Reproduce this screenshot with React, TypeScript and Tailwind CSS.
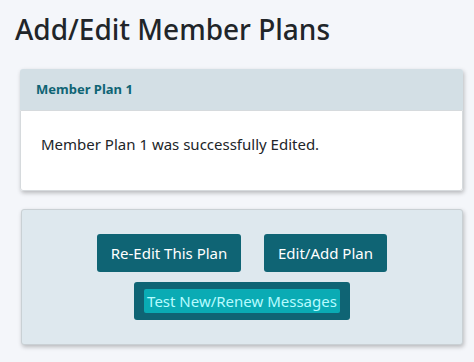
import React from "react";

export default function App() {
  return (
    <div className="min-h-screen bg-[#f4f6fa] pt-[12px] font-['Noto_Sans','Open_Sans',sans-serif] text-[#212529]">
      <h1 className="ml-[15px] text-[28px] leading-[34px] font-medium">Add/Edit Member Plans</h1>
      <div className="ml-[20px] mt-[23px] w-[443px] rounded-[3px] shadow-[1px_2px_4px_rgba(0,0,0,0.25)]">
        <div className="flex h-[41px] items-center rounded-t-[3px] bg-[#d3dfe5] px-[16px] text-[13px] font-bold text-[#0f6474]">
          Member Plan 1
        </div>
        <div className="h-[81px] rounded-b-[3px] border border-[#d6dadd] bg-white px-[20px] pt-[22px] text-[15px] leading-[22px]">
          Member Plan 1 was successfully Edited.
        </div>
      </div>
      <div className="ml-[21px] mt-[18px] flex h-[136px] w-[442px] flex-col items-center gap-[10px] rounded-[3px] border border-[#c9d0d4] bg-[#dee8ee] pt-[24px] shadow-[1px_2px_4px_rgba(0,0,0,0.25)]">
        <div className="flex gap-[23px]">
          <button className="h-[38px] w-[144px] rounded-[3px] bg-[#0f6474] text-[15px] text-white">Re-Edit This Plan</button>
          <button className="h-[38px] w-[123px] rounded-[3px] bg-[#0f6474] text-[15px] text-white">Edit/Add Plan</button>
        </div>
        <button className="flex h-[38px] w-[216px] items-center justify-center rounded-[3px] bg-[#0f6474] text-[15px]">
          <span className="rounded-[2px] bg-[#0aabb4] px-[3px] py-[1px] text-[#b6fbff]">Test New/Renew Messages</span>
        </button>
      </div>
    </div>
  );
}
